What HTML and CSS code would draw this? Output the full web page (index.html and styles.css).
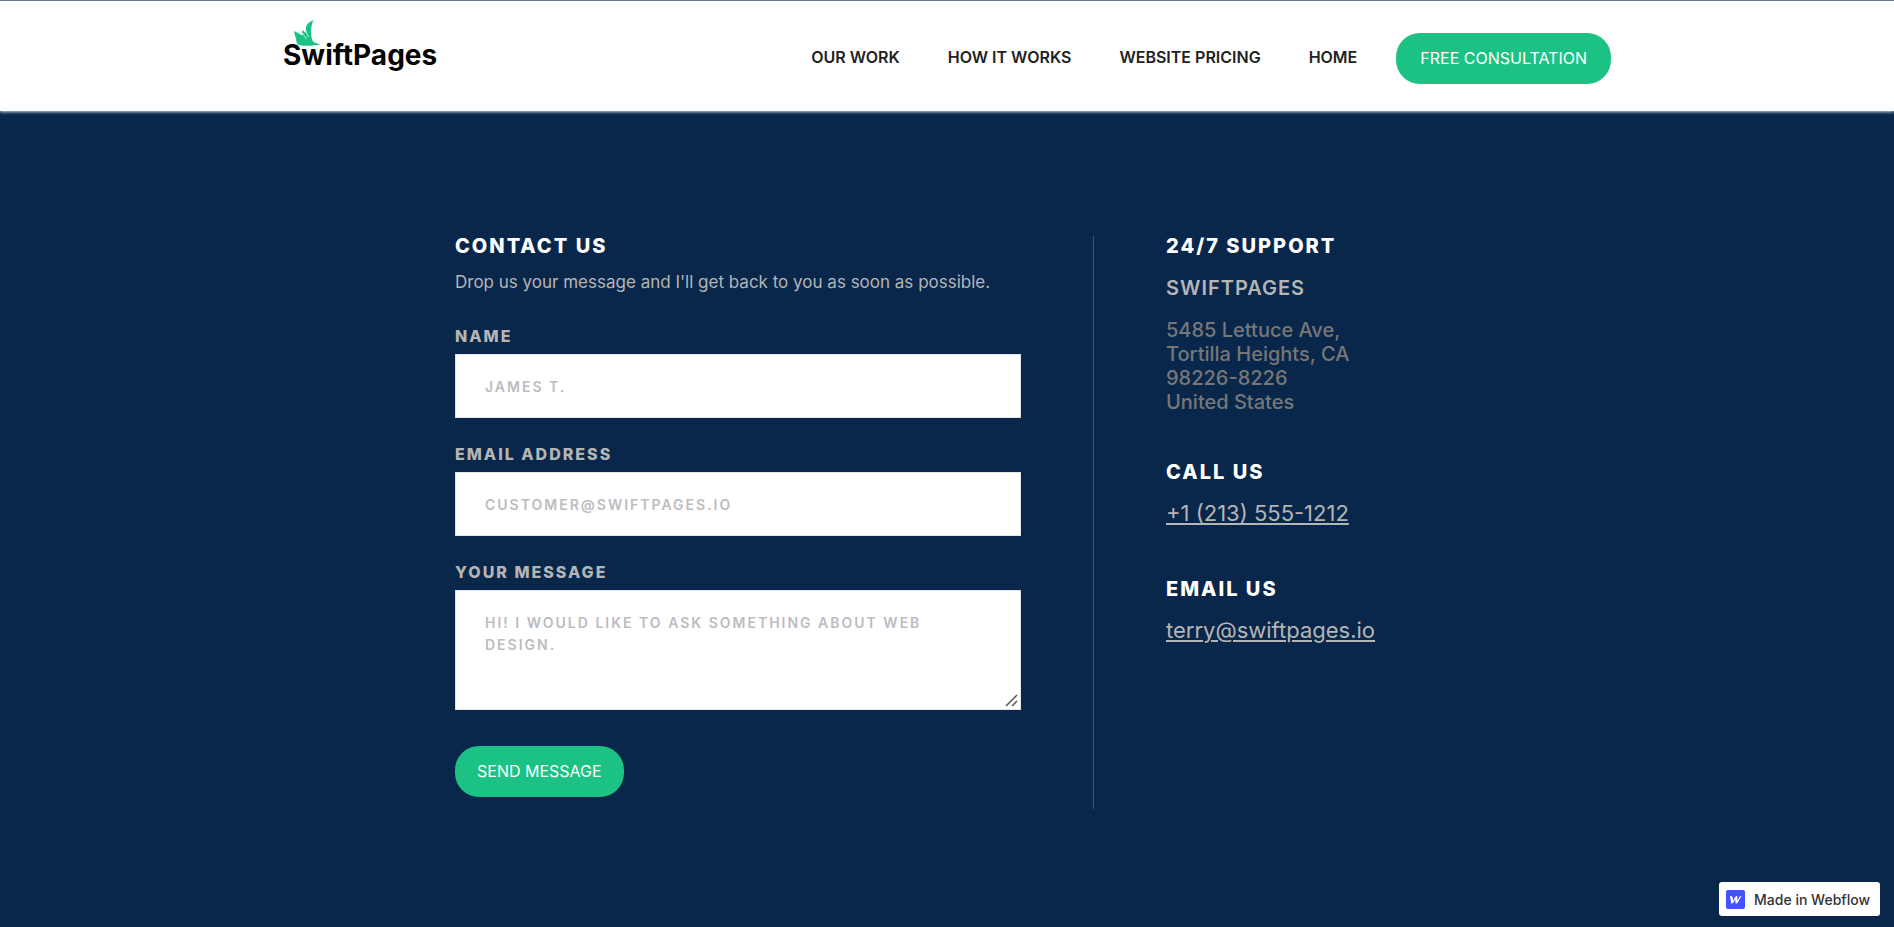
FILE: index.html
```html
<!DOCTYPE html>
<html lang="en">
<head>
<meta charset="utf-8">
<meta name="viewport" content="width=device-width, initial-scale=1">
<title>SwiftPages – Contact</title>
<link rel="stylesheet" href="styles.css">
</head>
<body>
<header class="header">
  <div class="header-inner">
    <a class="logo" href="#">
      <svg class="logo-bird" viewBox="0 0 28 28" aria-hidden="true">
        <path fill="#1cc184" d="M20.500 1 C16 3 13.500 5 13 8 L12.500 14 L9.500 11 L9 13 L9.800 16.500 L1 12 C1.500 15 2 17 3 19 C3 21 3.500 23.500 4.500 25.500 C9 27.500 20 27 28 25.300 C25 25 22 24 20 22.500 C17.500 18 17 9 20.500 1Z"/>
        <path stroke="#fff" stroke-width="0.700" fill="none" d="M12.500 11 L15.500 18 M9.500 14 L13.500 20"/>
      </svg>
      <span class="logo-text">SwiftPages</span>
    </a>
    <nav class="nav">
      <a class="nav-link" href="#">OUR WORK</a>
      <a class="nav-link" href="#">HOW IT WORKS</a>
      <a class="nav-link" href="#">WEBSITE PRICING</a>
      <a class="nav-link" href="#">HOME</a>
      <a class="button nav-button" href="#">FREE CONSULTATION</a>
    </nav>
  </div>
</header>
<main class="contact">
  <section class="contact-main">
    <h2 class="heading">CONTACT US</h2>
    <p class="intro">Drop us your message and I'll get back to you as soon as possible.</p>
    <form class="form">
      <div class="field">
        <label class="label" for="name">NAME</label>
        <input class="input" id="name" type="text" placeholder="JAMES T.">
      </div>
      <div class="field">
        <label class="label" for="email">EMAIL ADDRESS</label>
        <input class="input" id="email" type="email" placeholder="CUSTOMER@SWIFTPAGES.IO">
      </div>
      <div class="field">
        <label class="label" for="message">YOUR MESSAGE</label>
        <textarea class="input message" id="message" placeholder="HI! I WOULD LIKE TO ASK SOMETHING ABOUT WEB DESIGN."></textarea>
      </div>
      <button class="button submit" type="submit">SEND MESSAGE</button>
    </form>
  </section>
  <aside class="support">
    <h2 class="heading">24/7 SUPPORT</h2>
    <h3 class="company">SWIFTPAGES</h3>
    <address class="address">5485 Lettuce Ave,<br>Tortilla Heights, CA<br>98226-8226<br>United States</address>
    <h2 class="heading">CALL US</h2>
    <a class="contact-link" href="tel:+12135551212">+1 (213) 555-1212</a>
    <h2 class="heading">EMAIL US</h2>
    <a class="contact-link" href="mailto:terry@swiftpages.io">terry@swiftpages.io</a>
  </aside>
</main>
<a class="badge" href="#">
  <svg class="badge-icon" viewBox="0 0 19 19" aria-hidden="true">
    <rect width="19" height="19" rx="2" fill="#4353ff"/>
    <path fill="#fff" d="M15.500 6 C14 6 13.300 6.800 13 7.600 L11.500 11 L11.200 6 C10 6 9.200 6.600 8.800 7.500 L7.200 11 L6.700 7.800 C6.500 6.500 5.600 6 4 6 L5.200 13.500 C6.600 13.500 7.400 12.800 7.800 12 L9.200 9.200 L9.600 13.500 C11 13.500 11.700 12.800 12.100 12Z"/>
  </svg>
  <span>Made in Webflow</span>
</a>
</body>
</html>
```
FILE: styles.css
```css
* {
  box-sizing: border-box;
}

body {
  margin: 0;
  min-height: 100vh;
  background: #09274b;
  font-family: Inter, "Open Sans", sans-serif;
  color: #fff;
}

a {
  color: inherit;
  text-decoration: none;
}

.header {
  background: #fff;
  border-top: 1px solid #6b7a90;
  box-shadow: 0 1px 3px rgba(255, 255, 255, 0.8);
}

.header-inner {
  display: flex;
  justify-content: space-between;
  max-width: 1376px;
  height: 110px;
  margin: 0 auto;
  padding: 0 24px;
}

.logo {
  position: relative;
  padding-top: 36px;
  color: #050505;
}

.logo-text {
  font-size: 28px;
  font-weight: 700;
  line-height: 36px;
}

.logo-bird {
  position: absolute;
  top: 18px;
  left: 10px;
  width: 28px;
  height: 28px;
}

.nav {
  display: flex;
  align-items: flex-start;
  gap: 48px;
  padding-top: 32px;
}

.nav-link {
  color: #222;
  font-size: 16px;
  font-weight: 600;
  line-height: 48px;
}

.button {
  display: inline-block;
  padding: 0 24px;
  border: 0;
  border-radius: 24px;
  background: #1cc184;
  color: #fff;
  font-family: inherit;
  font-size: 16px;
  line-height: 51px;
}

.nav-button {
  margin-left: -9px;
}

.contact {
  display: flex;
  max-width: 984px;
  margin: 0 auto;
  padding: 125px 0 118px;
}

.contact-main {
  flex: 0 1 639px;
  padding-right: 72px;
  padding-bottom: 12px;
  border-right: 1px solid #415372;
}

.heading {
  margin: 0;
  font-size: 20px;
  font-weight: 800;
  line-height: 20px;
  letter-spacing: 2px;
}

.intro {
  margin: 16px 0 0;
  color: #b5b5b5;
  font-size: 17px;
  line-height: 20px;
}

.form {
  margin-top: 34px;
}

.field {
  margin-bottom: 26px;
}

.label {
  display: block;
  margin-bottom: 8px;
  color: #b5b5b5;
  font-size: 16px;
  font-weight: 800;
  line-height: 20px;
  letter-spacing: 2px;
}

.input {
  display: block;
  width: 100%;
  height: 64px;
  padding: 0 29px;
  border: 1px solid #e3e3e8;
  border-radius: 0;
  background: #fff;
  color: #222;
  font-family: inherit;
  font-size: 14px;
  font-weight: 600;
  line-height: 22px;
  letter-spacing: 2px;
}

.input::placeholder {
  color: #bcbcc1;
}

.message {
  height: 120px;
  padding-top: 21px;
}

.message::-webkit-resizer {
  background: url("data:image/svg+xml,%3Csvg xmlns='http://www.w3.org/2000/svg' width='15' height='15'%3E%3Cpath d='M1 12L12 1M7 12L12 7' stroke='%23555' stroke-width='1.5'/%3E%3C/svg%3E") no-repeat right bottom;
}

.submit {
  margin-top: 10px;
  padding: 0 22px;
}

.support {
  padding-left: 72px;
}

.company {
  margin: 22px 0 0;
  color: #b5b5b5;
  font-size: 20px;
  font-weight: 600;
  line-height: 20px;
  letter-spacing: 1px;
}

.address {
  margin: 20px 0 48px;
  color: #777;
  font-size: 20px;
  font-weight: 500;
  font-style: normal;
  line-height: 24px;
}

.contact-link {
  display: block;
  margin: 15px 0 50px;
  color: #b5b5b5;
  font-size: 22px;
  line-height: 32px;
  text-decoration: underline;
}

.badge {
  position: fixed;
  right: 14px;
  bottom: 11px;
  display: flex;
  align-items: center;
  gap: 9px;
  height: 34px;
  padding: 0 10px 0 7px;
  border-radius: 3px;
  background: #fff;
  color: #333;
  font-size: 14px;
  font-weight: 500;
}

.badge-icon {
  width: 19px;
  height: 19px;
}
```
